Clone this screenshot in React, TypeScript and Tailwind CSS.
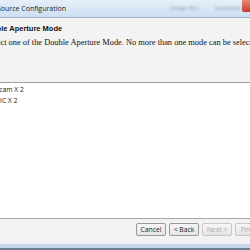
const uiFont = { fontFamily: '"Open Sans", "Noto Sans", sans-serif' };

const items = [
  { label: "Webcam X 2", shift: "-ml-[15px]" },
  { label: "MIC X 2", shift: "-ml-[6px]" },
];

function WizardButton({ label, disabled }: { label: string; disabled?: boolean }) {
  return (
    <button
      disabled={disabled}
      className={`h-[13px] w-[30px] shrink-0 rounded-[2px] border bg-linear-to-b from-[#f6f6f6] to-[#e4e4e4] text-[6.8px] leading-[11px] ${
        disabled ? "border-[#c8c8c8] text-[#a8a8a8]" : "border-[#9a9a9a] text-[#1a1a1a]"
      }`}
      style={uiFont}
    >
      {label}
    </button>
  );
}

export default function App() {
  return (
    <div className="flex h-[250px] w-[250px] flex-col overflow-hidden bg-[#f2f2f2]">
      {/* title bar */}
      <div className="flex h-[18px] shrink-0 items-center border-b border-[#a4b4c8] bg-linear-to-b from-[#e6eff9] to-[#cddff3]">
        <div className="-ml-[3px] w-[161px] shrink-0 text-[7px] leading-[17px] text-[#1e1e1e]" style={uiFont}>
          Source Configuration
        </div>
        <div
          className="flex flex-1 items-center gap-[16px] whitespace-nowrap pl-[12px] text-[6px] text-[#8c98a8] blur-[0.8px]"
          style={uiFont}
        >
          <span>Image Fps</span>
          <span>Condition</span>
        </div>
        <div className="h-[12px] w-[8px] shrink-0 self-start rounded-bl-[2px] bg-linear-to-b from-[#e28a7c] to-[#c2392b]" />
      </div>

      {/* header */}
      <div className="h-[65px] shrink-0 border-b border-[#a0a0a0] bg-[#f3f3f3] pt-[6px]">
        <div
          className="-ml-[18px] whitespace-nowrap text-[7.5px] font-bold leading-[10px] text-[#111]"
          style={{ fontFamily: '"Liberation Sans", Arial, sans-serif' }}
        >
          Double Aperture Mode
        </div>
        <div
          className="-ml-[14px] mt-[4px] whitespace-nowrap text-[8.4px] leading-[10px] text-[#111]"
          style={{ fontFamily: '"Liberation Serif", "Times New Roman", serif' }}
        >
          Select one of the Double Aperture Mode. No more than one mode can be selected.
        </div>
      </div>

      {/* mode list */}
      <div className="h-[135px] shrink-0 bg-white pt-[1px]">
        {items.map((it) => (
          <div
            key={it.label}
            className={`${it.shift} whitespace-nowrap text-[6.8px] leading-[11px] text-[#222]`}
            style={uiFont}
          >
            {it.label}
          </div>
        ))}
      </div>

      {/* footer */}
      <div className="flex h-[26px] shrink-0 items-start justify-end gap-[3px] border-t border-[#a8a8a8] bg-[#f2f2f2] pt-[4px] -mr-[15px]">
        <WizardButton label="Cancel" />
        <WizardButton label="< Back" />
        <WizardButton label="Next >" disabled />
        <WizardButton label="Finish" disabled />
      </div>

      <div className="h-[4px] shrink-0 bg-[#c7d8ec]" />
      <div className="h-[2px] shrink-0 bg-[#6c7d92]" />
    </div>
  );
}
